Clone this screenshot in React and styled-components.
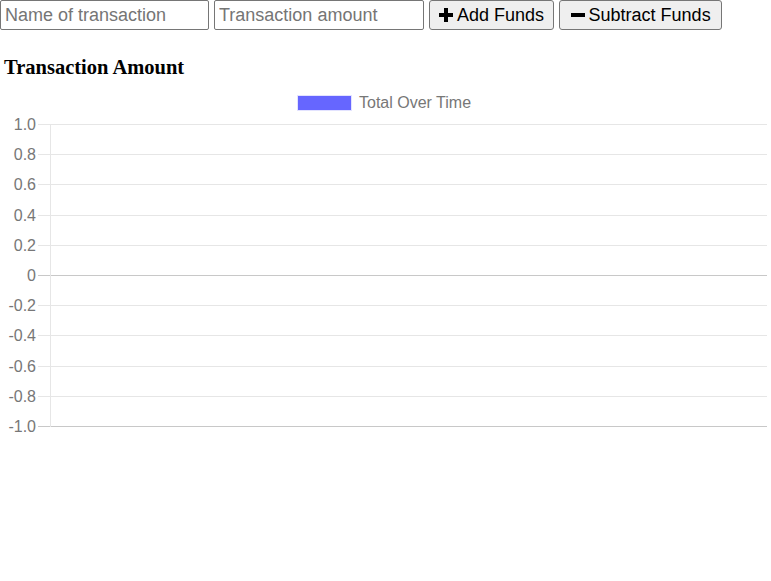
import styled, { createGlobalStyle } from "styled-components";

const GlobalStyle = createGlobalStyle`
  body {
    margin: 0;
    background: #fff;
    font-family: "Liberation Sans", Arial, sans-serif;
  }
`;

const Form = styled.form`
  display: flex;
  gap: 5px;
  align-items: flex-start;
`;

const Input = styled.input`
  box-sizing: border-box;
  width: ${({ $width }) => $width}px;
  height: 30px;
  padding: 1px 4px;
  border: 1px solid #767676;
  border-radius: 2px;
  font-family: "Liberation Sans", Arial, sans-serif;
  font-size: 18px;
  color: #000;
  &::placeholder {
    color: #757575;
  }
`;

const Button = styled.button`
  box-sizing: border-box;
  display: flex;
  align-items: center;
  gap: 4px;
  height: 30px;
  padding: 0 ${({ $pad }) => $pad}px;
  background: #efefef;
  border: 1px solid #767676;
  border-radius: 3px;
  font-family: "Liberation Sans", Arial, sans-serif;
  font-size: 18px;
  color: #000;
  svg {
    width: 14px;
    height: 14px;
  }
`;

const Heading = styled.h4`
  margin: 26px 4px 11px;
  font-family: "Liberation Serif", "Times New Roman", serif;
  font-size: 20.5px;
  font-weight: bold;
`;

const ChartBox = styled.div`
  width: 771px;
  height: 350px;
  svg {
    display: block;
  }
`;

function Plus() {
  return (
    <svg viewBox="0 0 14 14">
      <path d="M5 0h4v5h5v4H9v5H5V9H0V5h5z" fill="#000" />
    </svg>
  );
}

function Minus() {
  return (
    <svg viewBox="0 0 14 14">
      <path d="M0 5h14v4H0z" fill="#000" />
    </svg>
  );
}

const ticks = [1, 0.8, 0.6, 0.4, 0.2, 0, -0.2, -0.4, -0.6, -0.8, -1];

function Chart() {
  const top = 34;
  const step = 30.2;
  const left = 50;
  const right = 767;
  return (
    <svg width="771" height="350" fontFamily="Liberation Sans, Arial, sans-serif">
      <rect x="297.5" y="5.5" width="54" height="15" fill="#6666ff" stroke="#e3e3ff" />
      <text x="359" y="18" fontSize="16" fill="#777">Total Over Time</text>
      {ticks.map((t, i) => {
        const y = Math.round(top + i * step) + 0.5;
        const strong = t === 0 || i === ticks.length - 1;
        const label = t === 0 ? "0" : t.toFixed(1);
        return (
          <g key={t}>
            <line x1="38" x2={right} y1={y} y2={y} stroke={strong ? "#c8c8c8" : "#e6e6e6"} />
            <text x="36" y={y + 5.5} fontSize="16" fill="#777" textAnchor="end">{label}</text>
          </g>
        );
      })}
      <line x1={left + 0.5} x2={left + 0.5} y1={top} y2={Math.round(top + 10 * step) + 1} stroke="#e6e6e6" />
    </svg>
  );
}

export default function App() {
  return (
    <>
      <GlobalStyle />
      <Form onSubmit={(e) => e.preventDefault()}>
        <Input $width={209} placeholder="Name of transaction" />
        <Input $width={210} placeholder="Transaction amount" />
        <Button type="button" $pad={9}><Plus />Add Funds</Button>
        <Button type="button" $pad={10.5}><Minus />Subtract Funds</Button>
      </Form>
      <Heading>Transaction Amount</Heading>
      <ChartBox>
        <Chart />
      </ChartBox>
    </>
  );
}
